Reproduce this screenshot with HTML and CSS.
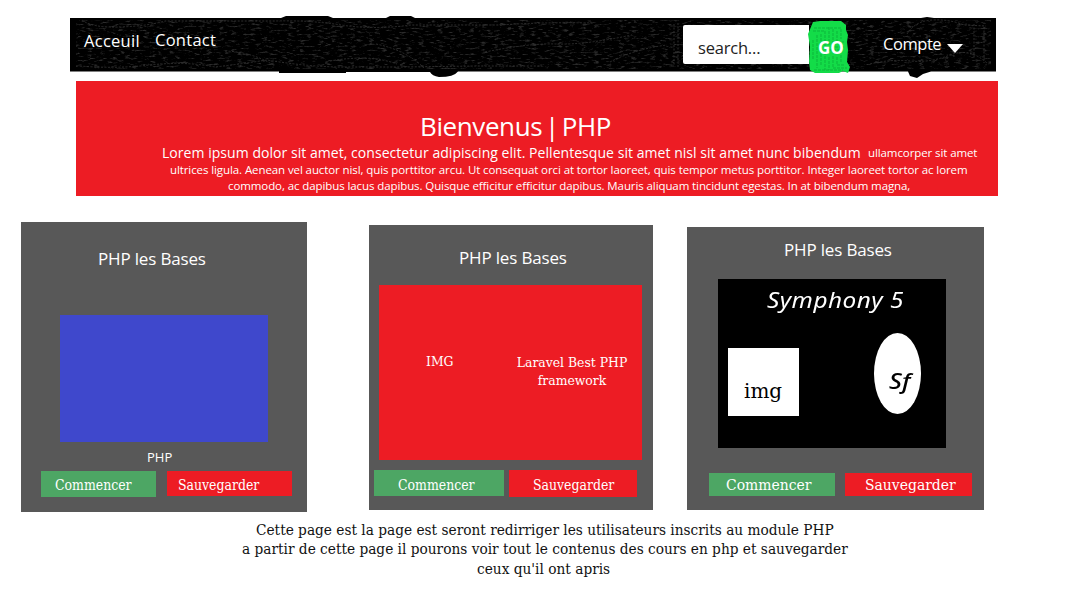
FILE: index.html
```html
<!DOCTYPE html>
<html lang="fr">
<head>
<meta charset="utf-8">
<title>Bienvenus | PHP</title>
<link rel="stylesheet" href="styles.css">
</head>
<body>
<header class="navbar">
  <svg class="brush" width="940" height="70" viewBox="62 12 940 70" aria-hidden="true">
    <defs>
      <filter id="grain" x="0" y="0" width="100%" height="100%" color-interpolation-filters="sRGB">
        <feTurbulence type="fractalNoise" baseFrequency="0.16 0.5" numOctaves="3" seed="8"/>
        <feColorMatrix values="0 0 0 0 0.17  0 0 0 0 0.17  0 0 0 0 0.17  4 0 0 0 -2.15"/>
      </filter>
    </defs>
    <path d="M70 18H281L286 16H328L333 18H386L390 16H411L415 18H921L927 17L934 18H996V71.500H931L923 74L917 78L910 76L908 71.500H458Q454 77 439 77Q432 76 430 72H346V73H279V71.500H70Z"/>
    <path class="grain" filter="url(#grain)" d="M76 20H686V69H76ZM850 22H991V68H850Z"/>
    <g class="strokes">
      <path d="M82 20q10 8 38 7t45 -6h110q34 -1 66 4t70 0h90q40 -3 92 -2"/>
      <path d="M80 66q35 3 70 -1t65 2q26 -3 52 -7q35 6 70 7h65l75 -1h65"/>
      <path d="M225 51q28 1 50 15M330 61q40 -7 67 3M376 44q30 6 48 24M485 52q45 -9 72 -8t75 -9M610 62q25 -13 57 -17"/>
      <path d="M907 34q8 -13 25 -14t32 5l22 1M870 64q20 -5 40 -3t40 -6t38 9M974 24v35M984 27v36M674 24v42M678 23v44"/>
    </g>
  </svg>
  <nav class="links">
    <a class="home">Acceuil</a>
    <a class="contact">Contact</a>
  </nav>
  <div class="search"><span>search...</span></div>
  <div class="go">
    <svg class="paint" width="44" height="56" viewBox="0 0 44 56" aria-hidden="true">
      <path class="green" d="M5 3L12 2H33L38 6L38 11L40 16L39 23L40 31L39 43L42 48L40 54L35 52L31 54H7L2 51L1 42L2 28L0 15Z"/>
      <path class="ridges" d="M6 9H34M5 12H17V29M9 16V49M13 15V47M17 33V51M21 8V26M25 10V28H36M29 12V23H36M33 10V20M21 38V51M25 37V49H39M29 38V46H36M33 36V43M5 21V40M6 51H35M21 31H34"/>
    </svg>
    <span>GO</span>
  </div>
  <div class="account"><span>Compte</span><i class="caret"></i></div>
</header>

<section class="hero">
  <h1>Bienvenus | PHP</h1>
  <p class="lead"><span class="big">Lorem ipsum dolor sit amet, consectetur adipiscing elit. Pellentesque sit amet nisl sit amet nunc bibendum</span><span class="small">ullamcorper sit amet</span></p>
  <p class="second">ultrices ligula. Aenean vel auctor nisl, quis porttitor arcu. Ut consequat orci at tortor laoreet, quis tempor metus porttitor. Integer laoreet tortor ac lorem</p>
  <p class="third">commodo, ac dapibus lacus dapibus. Quisque efficitur efficitur dapibus. Mauris aliquam tincidunt egestas. In at bibendum magna,</p>
</section>

<main class="cards">
  <article class="card basics">
    <h2>PHP les Bases</h2>
    <div class="picture"></div>
    <p class="caption">PHP</p>
    <div class="actions"><a class="start">Commencer</a><a class="save">Sauvegarder</a></div>
  </article>
  <article class="card laravel">
    <h2>PHP les Bases</h2>
    <div class="picture"><p class="img">IMG</p><p class="about">Laravel Best PHP<br>framework</p></div>
    <div class="actions"><a class="start">Commencer</a><a class="save">Sauvegarder</a></div>
  </article>
  <article class="card symfony">
    <h2>PHP les Bases</h2>
    <div class="picture">
      <h3>Symphony 5</h3>
      <div class="shapes"><div class="square">img</div><div class="oval"><span>Sf</span></div></div>
    </div>
    <div class="actions"><a class="start">Commencer</a><a class="save">Sauvegarder</a></div>
  </article>
</main>

<footer class="note">
  <p class="n1">Cette page est la page est seront redirriger les utilisateurs inscrits au module PHP</p>
  <p class="n2">a partir de cette page il pourons voir tout le contenus des cours en php et sauvegarder</p>
  <p class="n3">ceux qu'il ont apris</p>
</footer>
</body>
</html>
```
FILE: styles.css
```css
* { box-sizing: border-box; }
body { margin: 0; width: 1080px; height: 592px; overflow: hidden; background: #fff; font-family: "Segoe UI", "Open Sans", sans-serif; display: flow-root; }
h1, h2, h3, p { margin: 0; font-weight: 400; white-space: nowrap; }

.navbar { position: relative; display: flex; align-items: flex-start; width: 926px; height: 54px; margin: 18px 0 0 70px; color: #fff; font-size: 16.5px; line-height: 24px; }
.brush { position: absolute; left: -8px; top: -6px; }
.strokes { fill: none; stroke: #2e2e2e; stroke-width: 1; stroke-dasharray: 2 1.5; }
.links, .search, .go, .account { position: relative; }
.links { display: flex; width: 613px; padding-left: 14px; letter-spacing: 0.27px; }
.home { width: 71px; padding-top: 11px; }
.contact { padding-top: 10px; }
.search { width: 126px; height: 39px; margin-top: 7px; padding: 11px 0 0 15px; background: #fff; border-radius: 2px 0 0 2px; color: #222; letter-spacing: -0.2px; }
.go { width: 41px; height: 54px; margin-top: 1px; padding: 17px 0 0 9px; font-weight: 700; font-size: 17px; }
.go span { position: relative; }
.paint { position: absolute; left: -1px; top: 0; }
.green { fill: #13dc48; }
.ridges { fill: none; stroke: #0cb53b; stroke-width: 1; stroke-dasharray: 3 1; }
.account { display: flex; padding: 14px 0 0 33px; letter-spacing: -0.45px; }
.account span { width: 64px; }
.caret { width: 16px; height: 9px; margin-top: 12px; background: #fff; clip-path: polygon(0 0, 100% 0, 50% 100%); }

.hero { width: 922px; height: 115px; margin: 9px 0 0 76px; padding-top: 27px; background: #ed1c24; color: #fff; }
.hero h1 { padding-left: 344px; font-size: 26px; line-height: 36px; letter-spacing: -0.4px; word-spacing: -3.5px; }
.lead { display: flex; height: 18px; padding-left: 86px; line-height: 18px; }
.big { width: 706px; font-size: 14px; letter-spacing: 0.045px; }
.small, .second, .third { font-size: 11.5px; letter-spacing: -0.095px; }
.second { padding-left: 94px; line-height: 16px; }
.third { padding-left: 152px; line-height: 16px; }

.cards { display: flex; align-items: flex-start; height: 290px; margin: 26px 0 0 21px; color: #fff; }
.card { background: #585858; }
.card h2 { font-size: 17px; line-height: 24px; letter-spacing: -0.17px; }
.actions { display: flex; font-family: "Roboto Slab", "DejaVu Serif", serif; font-stretch: condensed; font-size: 13.9px; }
.start { background: #4da664; }
.save { background: #ed1c24; }

.basics { width: 286px; height: 290px; padding-top: 25px; }
.basics h2 { padding-left: 77px; }
.basics .picture { width: 208px; height: 127px; margin: 44px 0 0 39px; background: #3f48cc; }
.caption { padding-left: 126px; font-size: 13px; line-height: 18px; margin-top: 6px; }
.basics .actions { margin: 5px 0 0 20px; gap: 11px; }
.basics .start { width: 115px; height: 26px; padding-left: 14px; line-height: 29px; }
.basics .save { width: 125px; height: 25px; padding-left: 11px; line-height: 28px; }

.laravel { width: 284px; height: 285px; margin: 3px 0 0 62px; padding-top: 21px; }
.laravel h2 { padding-left: 90px; }
.laravel .picture { display: flex; width: 263px; height: 175px; margin: 15px 0 0 10px; padding-top: 67px; background: #ed1c24; font-family: "Roboto Slab", "DejaVu Serif", serif; font-stretch: condensed; font-size: 13.8px; line-height: 18px; }
.img { flex: none; width: 124px; padding-left: 47px; }
.about { flex: none; width: 138px; padding-top: 1px; text-align: center; }
.laravel .actions { margin: 10px 0 0 5px; gap: 5px; }
.laravel .start { width: 130px; height: 26px; padding-left: 24px; line-height: 30px; }
.laravel .save { width: 128px; height: 27px; padding-left: 24px; line-height: 30px; }

.symfony { width: 297px; height: 283px; margin: 5px 0 0 34px; padding-top: 11px; }
.symfony h2 { padding-left: 97px; }
.symfony .picture { width: 228px; height: 169px; margin: 17px 0 0 31px; padding-top: 6px; background: #000; }
.symfony h3 { margin-left: 49px; font: italic 21px/30px "Segoe Print", "Noto Sans", sans-serif; letter-spacing: 0.4px; transform: scaleX(1.16); transform-origin: left; }
.shapes { display: flex; margin-top: 18px; padding-left: 10px; color: #000; }
.square { width: 71px; height: 68px; margin-top: 15px; padding-left: 16px; background: #fff; font: 20px/87px "Roboto Slab", "DejaVu Serif", serif; }
.oval { width: 47px; height: 81px; margin-left: 75px; padding-left: 15px; border-radius: 50%; background: #fff; font: italic 500 21px/96px "Segoe Print", "Noto Sans", sans-serif; }
.oval span { display: inline-block; transform: scaleX(1.2); transform-origin: left; }
.symfony .actions { margin: 25px 0 0 22px; gap: 10px; font-size: 15.5px; }
.symfony .start { width: 126px; height: 23px; padding-left: 17px; line-height: 25px; }
.symfony .save { width: 127px; height: 23px; padding-left: 20px; line-height: 24px; }

.note { font-family: "Roboto Slab", "DejaVu Serif", serif; font-stretch: condensed; font-size: 15.25px; line-height: 19px; color: #111; padding: 9px 0 0 242px; }
.n1 { padding-left: 14px; }
.n3 { padding-left: 235px; margin-top: 1px; }
```
